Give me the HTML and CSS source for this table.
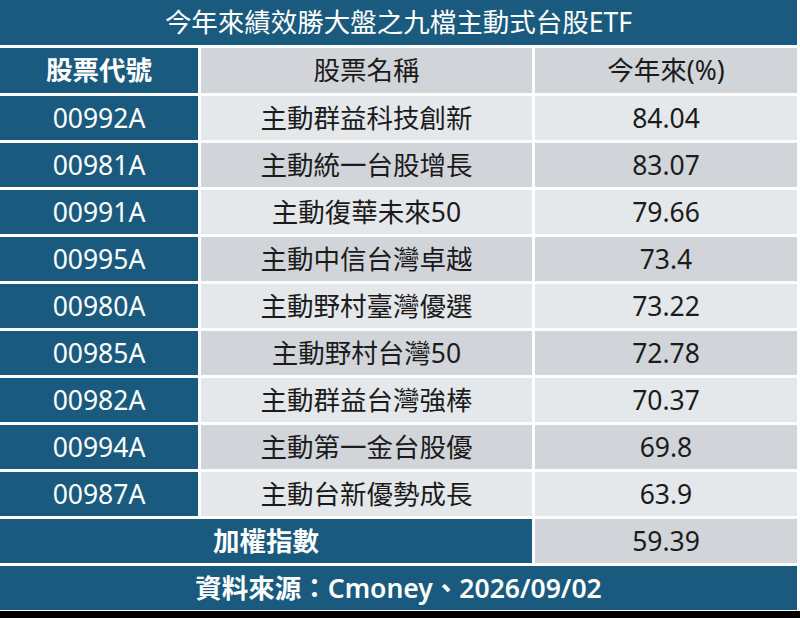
FILE: index.html
```html
<!DOCTYPE html>
<html lang="zh-Hant">
<head>
<meta charset="utf-8">
<title>今年來績效勝大盤之九檔主動式台股ETF</title>
<link rel="stylesheet" href="styles.css">
</head>
<body>
<div class="frame">
  <div class="table">
    <div class="cell title span3">今年來績效勝大盤之九檔主動式台股ETF</div>

    <div class="cell blue bold">股票代號</div>
    <div class="cell gray">股票名稱</div>
    <div class="cell gray">今年來(%)</div>

    <div class="cell blue">00992A</div>
    <div class="cell light">主動群益科技創新</div>
    <div class="cell light">84.04</div>

    <div class="cell blue">00981A</div>
    <div class="cell gray">主動統一台股增長</div>
    <div class="cell gray">83.07</div>

    <div class="cell blue">00991A</div>
    <div class="cell light">主動復華未來50</div>
    <div class="cell light">79.66</div>

    <div class="cell blue">00995A</div>
    <div class="cell gray">主動中信台灣卓越</div>
    <div class="cell gray">73.4</div>

    <div class="cell blue">00980A</div>
    <div class="cell light">主動野村臺灣優選</div>
    <div class="cell light">73.22</div>

    <div class="cell blue">00985A</div>
    <div class="cell gray">主動野村台灣50</div>
    <div class="cell gray">72.78</div>

    <div class="cell blue">00982A</div>
    <div class="cell light">主動群益台灣強棒</div>
    <div class="cell light">70.37</div>

    <div class="cell blue">00994A</div>
    <div class="cell gray">主動第一金台股優</div>
    <div class="cell gray">69.8</div>

    <div class="cell blue">00987A</div>
    <div class="cell light">主動台新優勢成長</div>
    <div class="cell light">63.9</div>

    <div class="cell blue bold span2">加權指數</div>
    <div class="cell gray">59.39</div>

    <div class="cell blue semibold span3">資料來源：Cmoney、2026/09/02</div>
  </div>
</div>
</body>
</html>
```
FILE: styles.css
```css
html, body {
  margin: 0;
  padding: 0;
}
body {
  background: #000;
  width: 800px;
  height: 618px;
  overflow: hidden;
}
.frame {
  background: #fff;
  width: 800px;
  height: 611px;
}
.table {
  width: 797px;
  display: grid;
  grid-template-columns: 198px 331px 262px;
  grid-template-rows: 45px 45px repeat(11, 44px);
  gap: 3px;
  background: #fff;
  font-family: "Noto Sans", "Noto Sans CJK TC", sans-serif;
  font-size: 26.5px;
}
.cell {
  display: flex;
  align-items: center;
  justify-content: center;
  color: #1b1b1b;
  line-height: 1;
}
.span2 { grid-column: span 2; }
.span3 { grid-column: span 3; }
.title {
  background: #1a5a7e;
  color: #fff;
  font-weight: 400;
}
.blue {
  background: #1a5a7e;
  color: #fff;
}
.bold { font-weight: 700; }
.semibold { font-weight: 600; }
.gray { background: #d1d5da; }
.light { background: #e5e8eb; }
```
